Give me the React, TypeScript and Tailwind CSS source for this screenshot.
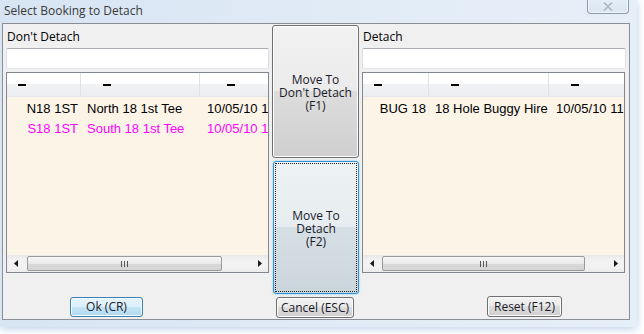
import React from "react";

type Row = { c1: string; c2: string; c3: string; color: string };

const UI = "font-['Open_Sans','Noto_Sans',sans-serif]";
const LIST = "font-['Liberation_Sans',Arial,sans-serif]";

function Arrow({ dir }: { dir: "l" | "r" }) {
  return (
    <svg width="4" height="7" viewBox="0 0 4 7">
      {dir === "l" ? (
        <polygon points="4,0 4,7 0,3.5" fill="#1a1a1a" />
      ) : (
        <polygon points="0,0 0,7 4,3.5" fill="#1a1a1a" />
      )}
    </svg>
  );
}

function ListBox({
  widths,
  dash,
  rows,
  thumbStart,
  thumbWidth,
}: {
  widths: [number, number];
  dash: [number, number, number];
  rows: Row[];
  thumbStart: number;
  thumbWidth: number;
}) {
  return (
    <div className="flex flex-col h-[201px] border border-[#828790] bg-[#fdf4e8] overflow-hidden">
      <div className="flex h-[24px] shrink-0 bg-[linear-gradient(to_bottom,#ffffff_0%,#ffffff_45%,#f1f2f4_50%,#eceef1_100%)] border-b border-[#e4e6ea]">
        <div style={{ width: widths[0] }} className="h-full border-r border-[#dfe2e6] flex items-center shrink-0">
          <div style={{ marginLeft: dash[0] }} className="w-[8px] h-[2px] bg-black" />
        </div>
        <div style={{ width: widths[1] }} className="h-full border-r border-[#dfe2e6] flex items-center shrink-0">
          <div style={{ marginLeft: dash[1] }} className="w-[8px] h-[2px] bg-black" />
        </div>
        <div className="h-full flex items-center flex-1">
          <div style={{ marginLeft: dash[2] }} className="w-[8px] h-[2px] bg-black" />
        </div>
      </div>
      <div className={`flex-1 pt-[2px] ${LIST} text-[13px]`}>
        {rows.map((r, i) => (
          <div key={i} className="flex h-[20px] items-center whitespace-nowrap" style={{ color: r.color }}>
            <div style={{ width: widths[0] }} className="shrink-0 text-right pr-[3px]">{r.c1}</div>
            <div style={{ width: widths[1] }} className="shrink-0 pl-[6px]">{r.c2}</div>
            <div className="pl-[7px] overflow-hidden">{r.c3}</div>
          </div>
        ))}
      </div>
      <div className="flex h-[17px] shrink-0 items-center bg-[linear-gradient(to_bottom,#e8e8e8,#f2f2f2_30%,#f2f2f2_70%,#ececec)]">
        <div className="w-[17px] h-full flex items-center justify-center shrink-0">
          <Arrow dir="l" />
        </div>
        <div style={{ marginLeft: thumbStart, width: thumbWidth }} className="h-[15px] shrink-0 rounded-[2px] border border-[#9a9a9a] bg-[linear-gradient(to_bottom,#f6f6f6,#e9e9e9_50%,#d9d9d9_51%,#d4d4d4)] flex items-center justify-center gap-[2px]">
          <div className="w-[1px] h-[6px] bg-[#555]" />
          <div className="w-[1px] h-[6px] bg-[#555]" />
          <div className="w-[1px] h-[6px] bg-[#555]" />
        </div>
        <div className="flex-1" />
        <div className="w-[17px] h-full flex items-center justify-center shrink-0">
          <Arrow dir="r" />
        </div>
      </div>
    </div>
  );
}

function TextBox() {
  return (
    <div className="h-[21px] bg-white border border-[#dbdfe6] border-t-[#abadb3] border-b-[#e3e9ef] rounded-[2px]" />
  );
}

const normalBtn =
  "rounded-[3px] border border-[#707070] bg-[linear-gradient(to_bottom,#f2f2f2_0%,#ebebeb_50%,#dddddd_50%,#cfcfcf_100%)] shadow-[inset_0_0_0_1px_#fcfcfc] text-[#1b1b2b]";

export default function App() {
  const left: Row[] = [
    { c1: "N18 1ST", c2: "North 18 1st Tee", c3: "10/05/10 11:00", color: "#000000" },
    { c1: "S18 1ST", c2: "South 18 1st Tee", c3: "10/05/10 11:00", color: "#ff00ff" },
  ];
  const right: Row[] = [
    { c1: "BUG 18", c2: "18 Hole Buggy Hire", c3: "10/05/10 11:00", color: "#000000" },
  ];

  return (
    <div className={`w-[644px] h-[334px] bg-white overflow-hidden ${UI}`}>
      <div className="w-[637px] h-[327px] flex flex-col bg-[linear-gradient(to_right,#d7e4f2,#e2ecf7_60%,#e6eff8)] shadow-[0_2px_8px_rgba(130,170,215,0.55)] rounded-br-[4px]">
        <div className="h-[23px] shrink-0 flex items-start justify-between">
          <div className="pl-[4px] pt-[3px] text-[12px] leading-[16px] text-[#3a3a3a]">Select Booking to Detach</div>
          <div className="mr-[8px] -mt-[1px] w-[42px] h-[15px] border border-[#8c9cb0] border-t-0 rounded-b-[4px] bg-[linear-gradient(to_bottom,#e4edf6,#dbe6f2)] flex items-center justify-center shadow-[inset_0_0_0_1px_rgba(255,255,255,0.6)]">
            <svg width="10" height="9" viewBox="0 0 10 9">
              <path d="M1 0.5 L9 8.5 M9 0.5 L1 8.5" stroke="#aab6c6" strokeWidth="1.6" fill="none" />
            </svg>
          </div>
        </div>
        <div className="ml-[2px] w-[628px] h-[297px] border border-[#8a8f96] bg-[#f0f0f0] flex">
          {/* left column */}
          <div className="ml-[3px] w-[263px] flex flex-col">
            <div className="h-[24px] flex items-center text-[12px] text-black leading-none pt-[1px] pl-[1px]">Don't Detach</div>
            <TextBox />
            <div className="mt-[3px]">
              <ListBox widths={[74, 119]} dash={[11, 22, 27]} rows={left} thumbStart={3} thumbWidth={195} />
            </div>
            <div className="mt-[24px] ml-[64px] w-[73px] h-[20px] rounded-[3px] border border-[#3c7fb1] bg-[linear-gradient(to_bottom,#e5f4fc_0%,#dcf0fb_50%,#c4e5f6_50%,#b3d9ef_100%)] shadow-[inset_0_0_0_1px_#f4fbff] flex items-center justify-center text-[12px] text-[#1b1b2b]">
              Ok (CR)
            </div>
          </div>
          {/* middle column */}
          <div className="ml-[3px] w-[87px] flex flex-col pt-[1px]">
            <div className={`h-[133px] ${normalBtn} flex flex-col items-center justify-center text-[12px] leading-[13px] pt-[2px]`}>
              <span>Move To</span>
              <span>Don't Detach</span>
              <span>(F1)</span>
            </div>
            <div className="mt-[3px] ml-[1px] w-[86px] h-[133px] rounded-[3px] border border-[#2f93d4] shadow-[0_0_2px_#6cc3f0] bg-[linear-gradient(to_bottom,#eef2f4_0%,#e6ecef_50%,#d6dfe4_50%,#cbd6dc_100%)] p-[1px]">
              <div className="w-full h-full border border-dotted border-[#222] flex flex-col items-center justify-center text-[12px] leading-[13px] text-[#1b1b2b] pt-[2px]">
                <span>Move To</span>
                <span>Detach</span>
                <span>(F2)</span>
              </div>
            </div>
            <div className={`mt-[3px] ml-[4px] w-[78px] h-[21px] ${normalBtn} flex items-center justify-center text-[12px]`}>
              Cancel (ESC)
            </div>
          </div>
          {/* right column */}
          <div className="ml-[3px] w-[264px] flex flex-col">
            <div className="h-[24px] flex items-center text-[12px] text-black leading-none pt-[1px] pl-[1px]">Detach</div>
            <TextBox />
            <div className="mt-[3px] w-[263px]">
              <ListBox widths={[66, 120]} dash={[11, 22, 22]} rows={right} thumbStart={2} thumbWidth={203} />
            </div>
            <div className={`mt-[23px] ml-[125px] w-[75px] h-[21px] ${normalBtn} flex items-center justify-center text-[12px]`}>
              Reset (F12)
            </div>
          </div>
        </div>
      </div>
    </div>
  );
}
